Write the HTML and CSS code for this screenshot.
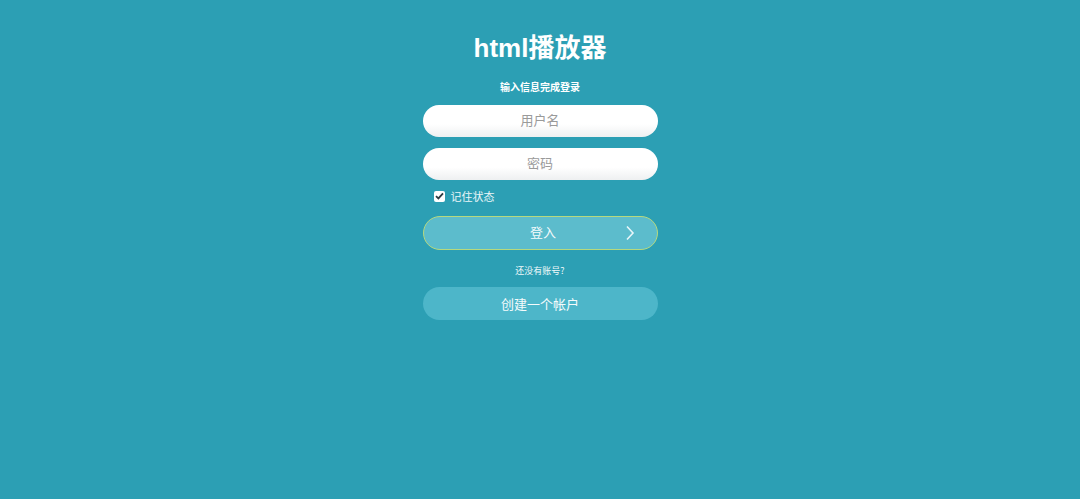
FILE: index.html
```html
<!doctype html>
<html lang="zh-CN">
<head>
	<meta charset="UTF-8">
	<title>html播放器</title>
	<link rel="stylesheet" href="styles.css">
</head>
<body>
	<div class="login">
		<h1 class="title">html播放器</h1>
		<p class="sub">输入信息完成登录</p>
		<form class="form">
			<input class="field" type="text" placeholder="用户名">
			<input class="field" type="password" placeholder="密码">
			<label class="remember">
				<span class="check">
					<svg width="9" height="8" viewBox="0 0 9 8"><path d="M1 4.2 L3.4 6.4 L8 1.4" fill="none" stroke="#2d3a40" stroke-width="1.8"/></svg>
				</span>
				记住状态
			</label>
			<button class="btn-login" type="button">
				登入
				<svg class="arrow" width="10" height="16" viewBox="0 0 10 16"><path d="M2 1.5 L8 8 L2 14.5" fill="none" stroke="#e8f6f9" stroke-width="1.6"/></svg>
			</button>
			<p class="no-account">还没有账号?</p>
			<button class="btn-create" type="button">创建一个帐户</button>
		</form>
	</div>
</body>
</html>
```

FILE: styles.css
```css
html,
body{
	height: 100%;
}
body{
	margin: 0;
	background: #2c9fb4;
	font-family: "Noto Sans CJK SC", "Liberation Sans", sans-serif;
	color: #fff;
	overflow: hidden;
}
.login{
	width: 235px;
	margin: 0 auto;
	padding-top: 29px;
	display: flex;
	flex-direction: column;
	align-items: center;
}
.title{
	margin: 0;
	font-family: "Liberation Sans", "Noto Sans CJK SC", sans-serif;
	font-size: 26px;
	line-height: 38px;
	font-weight: bold;
}
.sub{
	margin: 13px 0 0;
	font-size: 10px;
	line-height: 14px;
	font-weight: bold;
}
.form{
	width: 235px;
	margin-top: 11px;
	display: flex;
	flex-direction: column;
}
.field{
	box-sizing: border-box;
	height: 32px;
	margin-bottom: 11px;
	padding: 0 0 3px;
	border: 0;
	border-radius: 16px;
	background: linear-gradient(#fff 60%, #eef0f1);
	text-align: center;
	font: 13px "Noto Sans CJK SC", sans-serif;
	color: #333;
	outline: none;
}
.field::placeholder{
	color: #9a9a9a;
}
.remember{
	display: flex;
	align-items: center;
	gap: 6px;
	height: 14px;
	margin: -2px 0 0 11px;
	font-size: 11px;
	color: #eaf6f8;
}
.check{
	width: 11px;
	height: 11px;
	background: #fff;
	border-radius: 2px;
	display: flex;
	align-items: center;
	justify-content: center;
}
.btn-login{
	position: relative;
	box-sizing: border-box;
	height: 34px;
	margin-top: 13px;
	border: 1px solid #b6d97e;
	border-radius: 17px;
	background: #5cbccc;
	color: #f4fbfc;
	font: 13px "Noto Sans CJK SC", sans-serif;
	padding: 0 0 3px 6px;
}
.arrow{
	position: absolute;
	right: 22px;
	top: 8px;
}
.no-account{
	margin: 15px 0 0;
	text-align: center;
	font-size: 9px;
	line-height: 12px;
	color: #f0f9fb;
}
.btn-create{
	height: 33px;
	margin-top: 10px;
	border: 0;
	border-radius: 17px;
	background: #4db6c9;
	color: #f4fbfc;
	font: 13px "Noto Sans CJK SC", sans-serif;
}
```
